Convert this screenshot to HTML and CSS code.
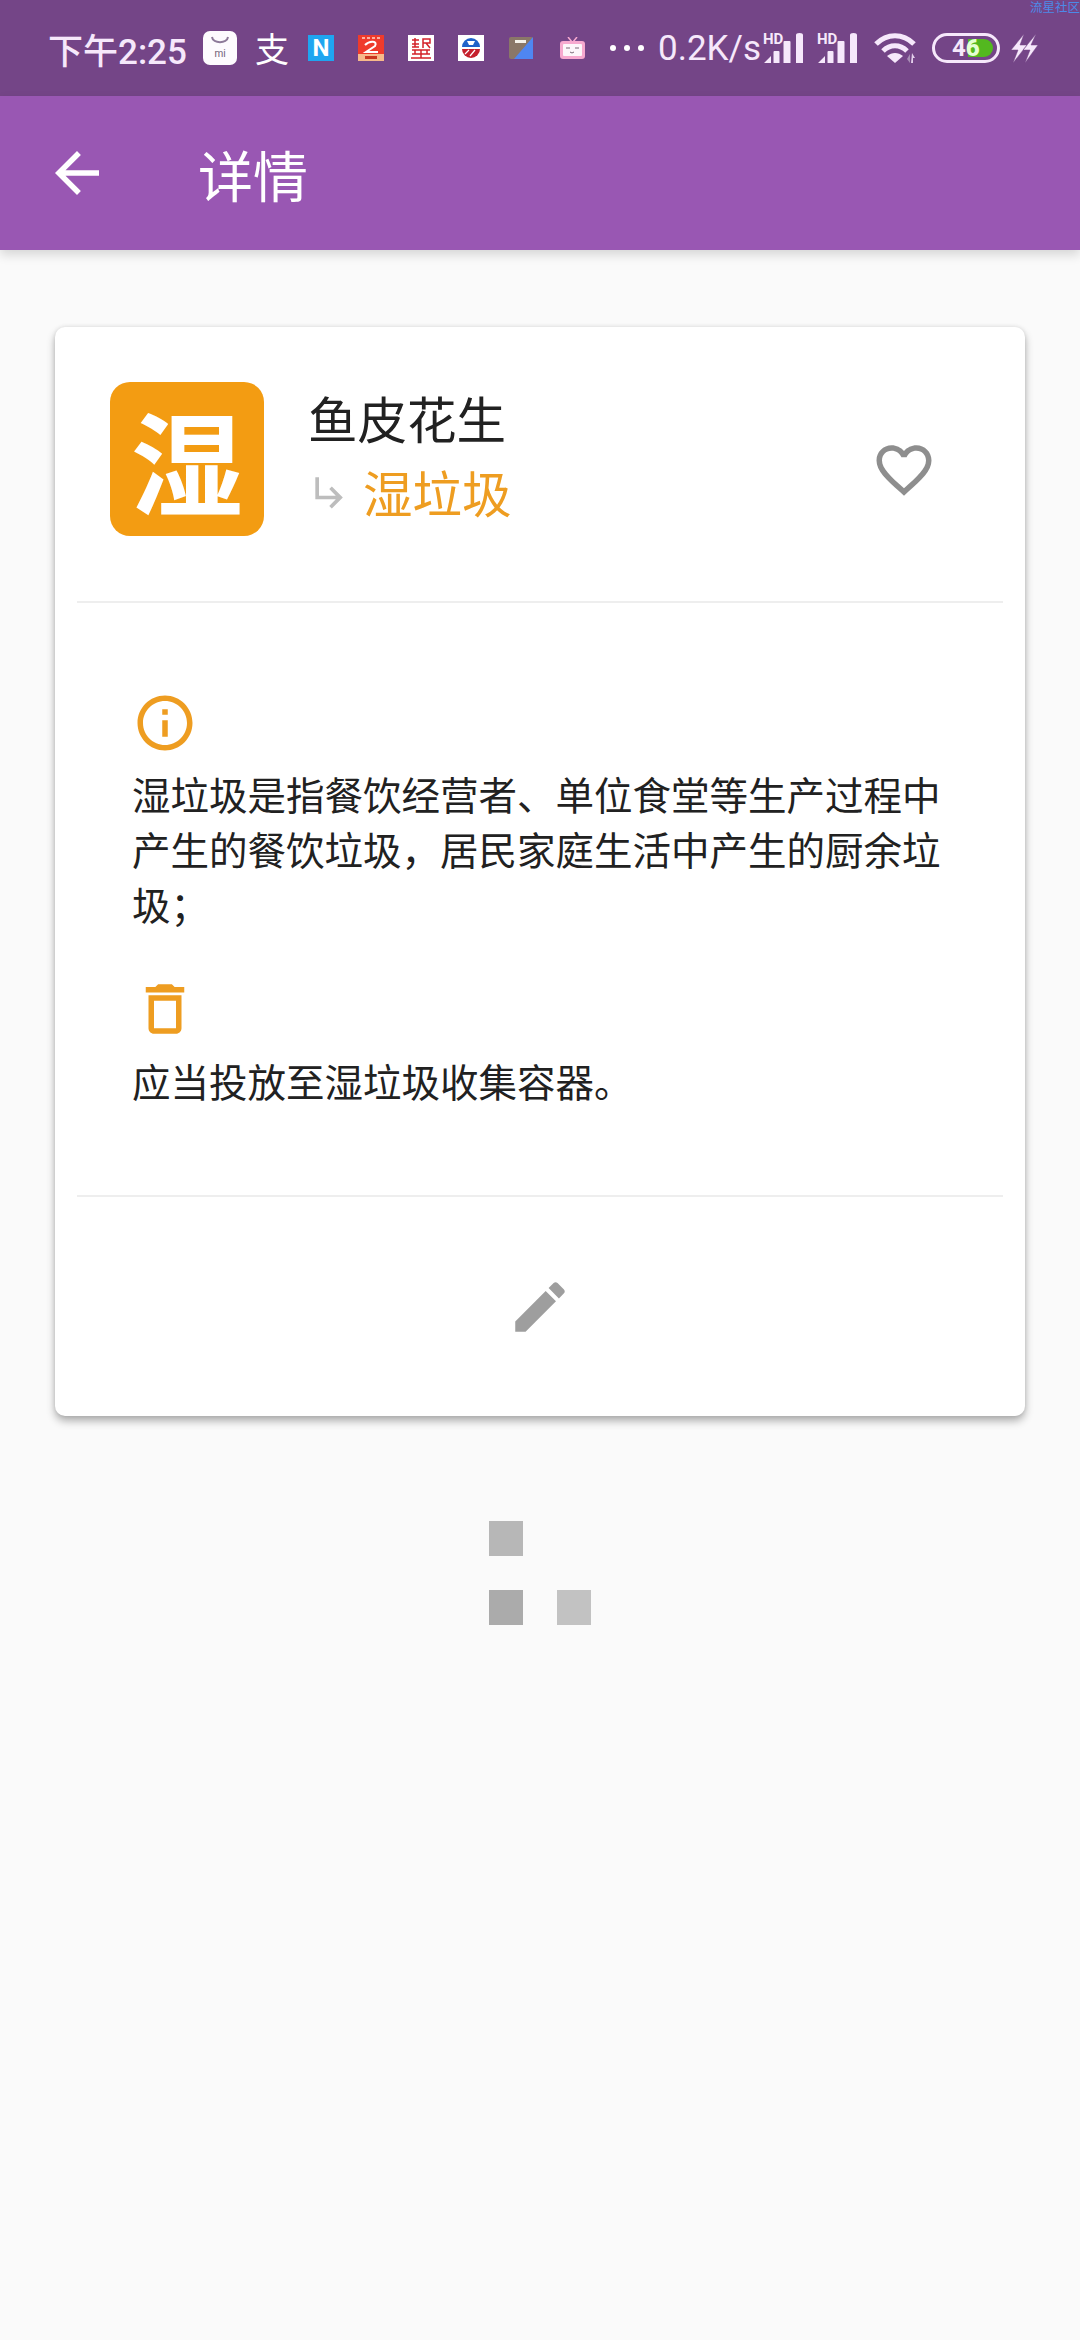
FILE: index.html
```html
<!DOCTYPE html>
<html>
<head>
  <meta charset="utf-8">
  <title>详情</title>
  <link rel="stylesheet" href="styles.css">
</head>
<body>
  <div class="watermark">流星社区</div>

  <div class="status-bar">
    <span class="time">下午2:25</span>
    <svg class="mi-shop" viewBox="0 0 34 34">
      <rect width="34" height="34" rx="7" fill="#fdfbfe"/>
      <path d="M9 6c1 7 15 7 16 0" fill="none" stroke="#8d7a99" stroke-width="2"/>
      <text x="17" y="26" font-size="10" text-anchor="middle" fill="#6f6078" font-family="Roboto, sans-serif">mi</text>
    </svg>
    <span class="alipay">支</span>
    <span class="app-n">N</span>
    <svg class="app-icon app-red" viewBox="0 0 26 26">
      <rect width="26" height="26" fill="#ef3b2c"/>
      <rect y="19" width="26" height="7" fill="#f7b98a"/>
      <rect x="7" y="21" width="12" height="3" fill="#c9361f"/>
      <path d="M7 10c5-5 13-4 10 1l-9 6h12" fill="none" stroke="#fff" stroke-width="2"/>
      <path d="M4 3h18" stroke="#ffd9c9" stroke-width="1.5" stroke-dasharray="3 2"/>
    </svg>
    <svg class="app-icon app-seal" viewBox="0 0 26 26">
      <rect width="26" height="26" fill="#fff"/>
      <g fill="none" stroke="#d3222a" stroke-width="1.5">
        <path d="M4 5h7M7 3v9M4 9h7M4 12h7M15 4h7v4h-7zM15 8v5M18 8l4 5"/>
        <path d="M4 15h18M7 15v4M13 15v8M19 15v4M4 19h18M3 23h20"/>
      </g>
    </svg>
    <svg class="app-icon app-globe" viewBox="0 0 26 26">
      <rect width="26" height="26" fill="#fff"/>
      <path d="M4 12a9 9 0 0 1 18 0z" fill="#1f62c9"/>
      <path d="M9 6h8l-2 4h-4z" fill="#fff"/>
      <path d="M4 14h18a9 9 0 0 1-18 0z" fill="#c5202c"/>
      <path d="M7 19l4-4M12 21l5-6" stroke="#fff" stroke-width="1.2"/>
    </svg>
    <svg class="app-icon app-wallet" viewBox="0 0 26 26">
      <rect x="1" y="2" width="24" height="22" rx="2" fill="#8a7768"/>
      <path d="M25 2v22H6z" fill="#4f86f2"/>
      <rect x="7" y="5" width="11" height="3" fill="#f4f1ea"/>
    </svg>
    <svg class="app-tv" viewBox="0 0 25 22">
      <path d="M8 0l4 5M17 0l-4 5" stroke="#f7a9cf" stroke-width="1.5"/>
      <rect y="4" width="25" height="18" rx="3" fill="#f7a9cf"/>
      <rect x="3" y="7" width="19" height="12" rx="1" fill="#fdf6fa"/>
      <path d="M6 11h4M15 11h4M10 15l2 1 2-1" stroke="#7a6a78" stroke-width="1" fill="none"/>
    </svg>
    <div class="more-dots"><i></i><i></i><i></i></div>
    <span class="speed">0.2K/s</span>
    <div class="signal">
      <span class="signal-hd">HD</span>
      <svg class="signal-bars" viewBox="0 0 41 31">
        <path d="M1 30l7-7v7zM10.500 19q0-1 1-1h4q1 0 1 1v11h-6zM20.500 9q0-1 1-1h5q1 0 1 1v21h-7zM33 2q0-2 3.500-2t3.500 2v28h-7z"/>
      </svg>
    </div>
    <div class="signal signal-second">
      <span class="signal-hd">HD</span>
      <svg class="signal-bars" viewBox="0 0 41 31">
        <path d="M1 30l7-7v7zM10.500 19q0-1 1-1h4q1 0 1 1v11h-6zM20.500 9q0-1 1-1h5q1 0 1 1v21h-7zM33 2q0-2 3.500-2t3.500 2v28h-7z"/>
      </svg>
    </div>
    <svg class="wifi" viewBox="0 0 42 30">
      <path d="M2 11c11-11 27-11 38 0M9 18c7-7 17-7 24 0" fill="none" stroke="#f6e8fb" stroke-width="5"/>
      <path d="M13 23c5-4 11-4 16 0l-8 7z" fill="#f6e8fb"/>
      <path d="M33 26l3-5v9z" fill="#a88db5"/>
      <path d="M38 20l3 5h-2v5h-2z" fill="#e2cdea"/>
    </svg>
    <div class="battery">
      <div class="battery-fill"></div>
      <span class="battery-text">4<b>6</b></span>
    </div>
    <svg class="bolt" viewBox="0 0 28 30">
      <path d="M14 1L1 17h7L3 30l14-18h-7zM26 1L13 17h7l-5 13 13-18h-7z" fill="#f6e8fb" stroke="#744587" stroke-width=".5"/>
    </svg>
  </div>

  <div class="app-bar">
    <svg class="icon back" viewBox="0 0 24 24"><path d="M20 11H7.83l5.59-5.59L12 4l-8 8 8 8 1.41-1.41L7.83 13H20v-2z"/></svg>
    <h1>详情</h1>
  </div>

  <div class="card">
    <div class="card-head">
      <div class="logo">湿</div>
      <div class="names">
        <div class="name">鱼皮花生</div>
        <div class="category">
          <svg class="arrow" viewBox="0 0 24 24"><path d="M19 15l-6 6-1.42-1.42L15.17 16H4V4h2v10h9.17l-3.59-3.58L13 9l6 6z"/></svg>
          <span>湿垃圾</span>
        </div>
      </div>
      <svg class="icon heart" viewBox="0 0 24 24"><path d="M16.5 3c-1.74 0-3.41.81-4.5 2.09C10.91 3.81 9.24 3 7.5 3 4.42 3 2 5.42 2 8.5c0 3.78 3.4 6.86 8.55 11.54L12 21.35l1.45-1.32C18.6 15.36 22 12.28 22 8.5 22 5.42 19.58 3 16.5 3zm-4.4 15.55l-.1.1-.1-.1C7.14 14.24 4 11.39 4 8.5 4 6.5 5.5 5 7.5 5c1.54 0 3.04.99 3.57 2.36h1.87C13.46 5.99 14.96 5 16.5 5c2 0 3.5 1.5 3.5 3.5 0 2.89-3.14 5.74-7.9 10.05z"/></svg>
    </div>
    <div class="divider"></div>
    <div class="card-body">
      <svg class="icon orange" viewBox="0 0 24 24"><path d="M11 7h2v2h-2zm0 4h2v6h-2zm1-9C6.48 2 2 6.48 2 12s4.48 10 10 10 10-4.48 10-10S17.52 2 12 2zm0 18c-4.41 0-8-3.59-8-8s3.59-8 8-8 8 3.59 8 8-3.59 8-8 8z"/></svg>
      <p class="desc">湿垃圾是指餐饮经营者、单位食堂等生产过程中产生的餐饮垃圾，居民家庭生活中产生的厨余垃圾；</p>
      <svg class="icon orange trash" viewBox="0 0 24 24"><path d="M6 19c0 1.1.9 2 2 2h8c1.1 0 2-.9 2-2V7H6v12zM8 9h8v10H8V9zm7.5-5l-1-1h-5l-1 1H5v2h14V4h-3.5z"/></svg>
      <p class="desc desc-last">应当投放至湿垃圾收集容器。</p>
    </div>
    <div class="divider"></div>
    <div class="card-foot">
      <svg class="icon edit" viewBox="0 0 24 24"><path d="M3 17.25V21h3.75L17.81 9.94l-3.75-3.75L3 17.25zM20.71 7.04c.39-.39.39-1.02 0-1.41l-2.34-2.34c-.39-.39-1.02-.39-1.41 0l-1.83 1.83 3.75 3.75 1.83-1.83z"/></svg>
    </div>
  </div>

  <div class="spinner">
    <div class="cell cell-a"></div>
    <div class="cell cell-empty"></div>
    <div class="cell cell-b"></div>
    <div class="cell cell-c"></div>
  </div>
</body>
</html>
```

FILE: styles.css
```css
* {
  box-sizing: border-box;
}
body {
  margin: 0;
  width: 1080px;
  height: 2340px;
  overflow: hidden;
  background-color: #fafafa;
  font-family: "Noto Sans CJK SC", Roboto, sans-serif;
  color: #212121;
}
svg {
  display: block;
  flex: none;
}
.watermark {
  position: absolute;
  top: 0;
  right: 0;
  font-size: 12.5px;
  line-height: 13px;
  color: #4c8ae8;
  white-space: nowrap;
}

/* status bar */
.status-bar {
  display: flex;
  align-items: center;
  height: 96px;
  padding-left: 48px;
  background-color: #744587;
  color: #f6e8fb;
}
.time {
  width: 138px;
  font-family: Roboto, "Noto Sans CJK SC", sans-serif;
  font-size: 35px;
  font-weight: 500;
  white-space: nowrap;
}
.mi-shop {
  width: 34px;
  height: 34px;
  margin-left: 17px;
}
.alipay {
  width: 34px;
  margin-left: 18px;
  font-size: 34px;
  line-height: 34px;
  color: #fff;
}
.app-n {
  width: 26px;
  height: 26px;
  margin-left: 19px;
  background-color: #1fa5f0;
  color: #fff;
  font-family: Roboto, sans-serif;
  font-size: 24px;
  font-weight: 700;
  line-height: 26px;
  text-align: center;
}
.app-icon {
  width: 26px;
  height: 26px;
  margin-left: 24px;
}
.app-tv {
  width: 25px;
  height: 22px;
  margin-left: 26px;
}
.more-dots {
  display: flex;
  gap: 8px;
  margin-left: 25px;
}
.more-dots i {
  width: 6px;
  height: 6px;
  border-radius: 50%;
  background-color: #fff;
}
.speed {
  width: 100px;
  margin-left: 14px;
  font-family: Roboto, sans-serif;
  font-size: 35px;
  white-space: nowrap;
}
.signal {
  position: relative;
  width: 41px;
  height: 31px;
  margin-left: 5px;
}
.signal-second {
  margin-left: 13px;
}
.signal-hd {
  position: absolute;
  top: 0;
  left: 0;
  font-family: Roboto, sans-serif;
  font-size: 15px;
  font-weight: 700;
  line-height: 13px;
}
.signal-bars {
  width: 41px;
  height: 31px;
  fill: #f6e8fb;
}
.wifi {
  width: 42px;
  height: 30px;
  margin-left: 16px;
}
.battery {
  position: relative;
  width: 68px;
  height: 30px;
  margin-left: 16px;
  border: 3px solid #f6e8fb;
  border-radius: 15px;
}
.battery-fill {
  position: absolute;
  top: 3px;
  left: 33px;
  width: 25px;
  height: 18px;
  border-radius: 0 9px 9px 0;
  background-color: #53b81f;
}
.battery-text {
  position: absolute;
  top: 0;
  left: 17px;
  font-family: Roboto, sans-serif;
  font-size: 24px;
  font-weight: 700;
  line-height: 24px;
  color: #f6e8fb;
}
.battery-text b {
  color: #e4ffd2;
}
.bolt {
  width: 28px;
  height: 30px;
  margin-left: 10px;
}

/* app bar */
.app-bar {
  display: flex;
  align-items: center;
  height: 154px;
  padding-left: 44px;
  background-color: #9957b3;
  box-shadow: 0 5px 10px rgba(0, 0, 0, 0.14);
}
.app-bar h1 {
  margin: 0 0 0 88px;
  font-size: 55px;
  font-weight: 400;
  color: #fff;
}
.icon {
  width: 66px;
  height: 66px;
}
.back {
  fill: #fff;
}

/* card */
.card {
  width: 970px;
  margin: 77px 0 0 55px;
  border-radius: 10px;
  background-color: #fff;
  box-shadow: 0 5px 8px rgba(0, 0, 0, 0.3), 0 0 4px rgba(0, 0, 0, 0.1);
}
.card-head {
  display: flex;
  align-items: center;
  height: 274px;
  padding: 55px 88px 65px 55px;
}
.logo {
  width: 154px;
  height: 154px;
  border-radius: 20px;
  background-color: #f39c12;
  color: #fff;
  font-size: 112px;
  font-weight: 700;
  line-height: 154px;
  text-align: center;
}
.names {
  flex: 1;
  margin: -9px 0 0 44px;
}
.name {
  font-size: 49.5px;
  line-height: 74px;
}
.category {
  display: flex;
  align-items: center;
  height: 74px;
  font-size: 49.5px;
  color: #ee9d21;
}
.arrow {
  width: 44px;
  height: 44px;
  margin-right: 11px;
  fill: #bdbdbd;
}
.heart {
  margin-top: 22px;
  fill: #8e8e8e;
}
.divider {
  height: 2px;
  margin: 0 22px;
  background-color: #eeeeee;
}
.card-body {
  padding: 87px 77px 87px;
}
.orange {
  fill: #ee9d21;
}
.desc {
  margin: 10px 0 0;
  font-size: 38.5px;
  line-height: 55px;
}
.trash {
  margin-top: 45px;
}
.desc-last {
  margin-top: 11px;
}
.card-foot {
  display: flex;
  align-items: center;
  justify-content: center;
  height: 219px;
}
.edit {
  fill: #9e9e9e;
}

/* loading squares */
.spinner {
  display: grid;
  grid-template-columns: 34px 34px 34px;
  grid-template-rows: 35px 35px;
  row-gap: 34px;
  width: 102px;
  margin: 105px 0 0 489px;
}
.cell-a {
  background-color: #b7b7b7;
}
.cell-empty {
  grid-column: 2 / 4;
}
.cell-b {
  background-color: #ababab;
}
.cell-c {
  grid-column: 3;
  background-color: #c2c2c2;
}
```
